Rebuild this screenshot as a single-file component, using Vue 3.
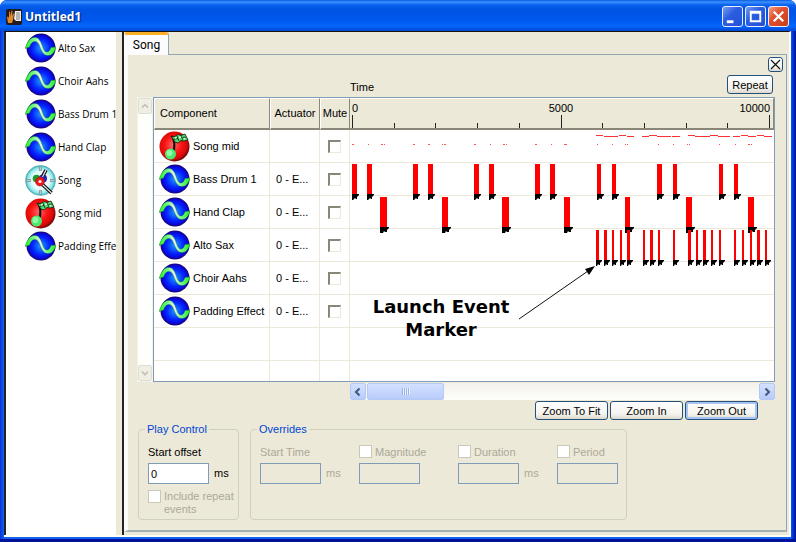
<template>
  <div class="window">
    <svg class="symbols" width="0" height="0" aria-hidden="true">
      <defs>
        <radialGradient id="blueBall" cx="0.5" cy="0.5" r="0.5">
          <stop offset="0" stop-color="#1c9cff" />
          <stop offset="0.6" stop-color="#0424ff" />
          <stop offset="0.85" stop-color="#0808dc" />
          <stop offset="1" stop-color="#1c0468" />
        </radialGradient>
        <radialGradient id="redBall" cx="0.45" cy="0.45" r="0.55">
          <stop offset="0" stop-color="#ff6a6a" />
          <stop offset="0.5" stop-color="#fb1414" />
          <stop offset="0.85" stop-color="#d80808" />
          <stop offset="1" stop-color="#6c0808" />
        </radialGradient>
        <radialGradient id="tealBall" cx="0.5" cy="0.5" r="0.5">
          <stop offset="0" stop-color="#ffffff" />
          <stop offset="0.6" stop-color="#e4fbfb" />
          <stop offset="0.85" stop-color="#8ee6ea" />
          <stop offset="1" stop-color="#3cacb0" />
        </radialGradient>
        <linearGradient id="waveFill" x1="0" y1="0" x2="1" y2="0">
          <stop offset="0" stop-color="#20f020" />
          <stop offset="0.3" stop-color="#7cf890" />
          <stop offset="0.5" stop-color="#eef6ee" />
          <stop offset="0.7" stop-color="#7cf890" />
          <stop offset="1" stop-color="#20f020" />
        </linearGradient>
      </defs>
      <symbol id="wave" viewBox="0 0 31 31">
        <circle cx="16" cy="15" r="14.500" fill="url(#blueBall)" />
        <path d="M0 15.500 1.500 11.500C4 6 7 4 10.500 4.500 14 5 15.500 8 17.500 13.500 19 17.500 20 19 22 19 23.500 19 25 17.500 26 14.500L31 14C29.500 19.500 27 22.500 23 22.500 19 22.500 17 19 15 14 13.500 10 12 8.500 9.500 8.500 7 8.500 5.500 11 4.500 14Z" fill="url(#waveFill)" stroke="#107820" stroke-width=".4" />
      </symbol>
      <symbol id="midi" viewBox="0 0 31 31">
        <circle cx="15.500" cy="15.500" r="15" fill="url(#redBall)" />
        <path d="M13 5C16 10 16.500 15 14 24" fill="none" stroke="#000" stroke-width="2" />
        <path d="M12 5 15 6 19 3.500 22 4.500 26 3 29 9 25 10 22 9.500 19 12 16 11Z" fill="#54dc74" stroke="#0c1c0c" stroke-width=".8" />
        <path d="M18 5 20 10M22 5 24 9M14.500 8.500 19 7.500M23.500 6.500 27 6" stroke="#0c1c0c" stroke-width=".8" />
        <path d="M16 7 17.500 6.500M20 6.500 22 6M24.500 8 26 7.500" stroke="#d8ffe0" stroke-width="1.400" />
        <circle cx="11.500" cy="23" r="5.500" fill="#4ce870" />
        <circle cx="10.500" cy="22" r="3" fill="#8cffa4" />
      </symbol>
      <symbol id="clock" viewBox="0 0 31 31">
        <circle cx="15.500" cy="15.500" r="15" fill="url(#tealBall)" stroke="#3aa4a8" stroke-width=".5" />
        <path d="M15.500 1.500V6M15.500 25V29.500M1.500 15.500H6M25 15.500H29.500" stroke="#7c8c90" stroke-width="2.500" />
        <path d="M15.500 2V5.500M15.500 25.500V29M2 15.500H5.500M25.500 15.500H29" stroke="#c0c8cc" stroke-width="1" />
        <circle cx="11.500" cy="13.500" r="3.800" fill="#18a028" />
        <circle cx="18" cy="13.500" r="4" fill="#1c28c8" />
        <path d="M17.500 11.500 21 5" stroke="#101010" stroke-width="3.600" />
        <path d="M17.500 12 21 5" stroke="#e8e8e8" stroke-width="1.200" />
        <path d="M17.500 19.500 26.500 28" stroke="#101010" stroke-width="3.600" />
        <path d="M17.500 19.500 26.500 28" stroke="#e8e8e8" stroke-width="1.200" />
        <circle cx="15" cy="16.500" r="4.500" fill="#f01818" stroke="#900808" stroke-width=".5" />
        <circle cx="15" cy="16.500" r="1.600" fill="#fff0f0" />
      </symbol>
    </svg>

    <header class="title-bar">
      <svg class="app-icon" viewBox="0 0 16 16" aria-hidden="true">
        <rect width="16" height="16" rx="2" fill="#241c1c" />
        <path d="M2 14 1 8 2 7.500 3 9 3 3 4 2.500 4.500 7 5.500 1.500 6.500 2 6 7 7.500 4 8 5 7 11 6 14Z" fill="#e08828" />
        <path d="M9 2H15V12H10L8 10Z" fill="#f0f0ec" />
        <path d="M10 4H14M10 6H14M10 8H14M10 10H14" stroke="#807c78" />
      </svg>
      <h1>Untitled1</h1>
      <div class="window-buttons">
        <button aria-label="Minimize">
          <svg viewBox="0 0 20 20"><path d="M4 14H11V17H4Z" fill="#fff" /></svg>
        </button>
        <button aria-label="Maximize">
          <svg viewBox="0 0 20 20"><path d="M4 4H16V16H4ZM6 7V14H14V7Z" fill="#fff" fill-rule="evenodd" /></svg>
        </button>
        <button class="close" aria-label="Close">
          <svg viewBox="0 0 20 20"><path d="M5 5 15 15M15 5 5 15" stroke="#fff" stroke-width="2.400" /></svg>
        </button>
      </div>
    </header>

    <div class="client">
      <ul class="sidebar">
        <li v-for="item in library" :key="item.name">
          <svg class="ball"><use :href="'#' + item.icon" /></svg>
          <span>{{ item.name }}</span>
        </li>
      </ul>

      <main class="pane">
        <div class="tabs" role="tablist">
          <button class="tab" role="tab" aria-selected="true">Song</button>
        </div>

        <section class="panel">
          <div class="close-row">
            <button class="xp-button close-panel" aria-label="Close panel">
              <svg viewBox="0 0 13 13"><path d="M2 2 11 11M11 2 2 11" stroke="#111" stroke-width="1.200" /></svg>
            </button>
          </div>

          <div class="time-row">
            <span class="time-label">Time</span>
            <button class="xp-button repeat">Repeat</button>
          </div>

          <div class="editor">
            <div class="v-scroll">
              <button disabled aria-label="Scroll up">
                <svg viewBox="0 0 14 14"><path d="M3.500 9 7 5.500 10.500 9" /></svg>
              </button>
              <button disabled aria-label="Scroll down">
                <svg viewBox="0 0 14 14"><path d="M3.500 5.500 7 9 10.500 5.500" /></svg>
              </button>
            </div>

            <div class="editor-main">
              <div class="grid">
                <table>
                  <thead>
                    <tr>
                      <th class="col-component">Component</th>
                      <th class="col-actuator">Actuator</th>
                      <th class="col-mute">Mute</th>
                    </tr>
                  </thead>
                  <tbody>
                    <tr v-for="track in tracks" :key="track.name">
                      <td>
                        <div class="component">
                          <svg class="ball"><use :href="'#' + track.icon" /></svg>
                          <span>{{ track.name }}</span>
                        </div>
                      </td>
                      <td class="actuator">{{ track.actuator }}</td>
                      <td class="mute">
                        <input v-model="track.mute" type="checkbox" :aria-label="'Mute ' + track.name" />
                      </td>
                    </tr>
                    <tr><td></td><td></td><td></td></tr>
                    <tr class="last"><td></td><td></td><td></td></tr>
                  </tbody>
                </table>

                <div class="timeline">
                  <svg class="ruler">
                    <line
                      v-for="n in 11"
                      :key="n"
                      :x1="tickX(n - 1)"
                      :x2="tickX(n - 1)"
                      :y1="(n - 1) % 5 === 0 ? 16 : 24"
                      y2="29"
                      stroke="#222"
                      stroke-width="1"
                    />
                    <text x="2" y="13">0</text>
                    <text x="211" y="13" text-anchor="middle">5000</text>
                    <text x="420" y="13" text-anchor="end">10000</text>
                  </svg>
                  <svg class="chart">
                    <line v-for="n in 7" :key="n" x1="0" x2="100%" :y1="n * 33 - 0.5" :y2="n * 33 - 0.5" stroke="#ece9d8" />
                    <rect v-for="(note, i) in notes" :key="'n' + i" :x="note[0]" :y="note[2]" :width="note[1]" height="1" fill="#f33" />
                    <rect v-for="(dot, i) in dots" :key="'d' + i" :x="dot[0]" y="14" :width="dot[1]" height="1" fill="#f55" />
                    <g v-for="lane in lanes" :key="lane.name">
                      <g v-for="(event, i) in lane.events" :key="i">
                        <rect :x="event[0]" :y="lane.y" :width="event[1]" height="31" fill="#f00" />
                        <path :transform="`translate(${event[0]} ${lane.y + 30})`" :d="lane.marker" fill="#000" />
                      </g>
                    </g>
                    <line x1="169" y1="189" x2="238" y2="141" stroke="#111" />
                    <polygon points="245,136 235,139 239,145" />
                    <text class="note" x="91" y="183" text-anchor="middle">Launch Event</text>
                    <text class="note" x="91" y="206" text-anchor="middle">Marker</text>
                  </svg>
                </div>
              </div>

              <div class="h-scroll">
                <button aria-label="Scroll left">
                  <svg viewBox="0 0 14 14"><path d="M8.500 3.500 5 7 8.500 10.500" /></svg>
                </button>
                <div class="thumb"><i></i><i></i><i></i><i></i></div>
                <button class="right" aria-label="Scroll right">
                  <svg viewBox="0 0 14 14"><path d="M5.500 3.500 9 7 5.500 10.500" /></svg>
                </button>
              </div>
            </div>
          </div>

          <div class="zoom-row">
            <button class="xp-button">Zoom To Fit</button>
            <button class="xp-button">Zoom In</button>
            <button class="xp-button default">Zoom Out</button>
          </div>

          <div class="groups">
            <fieldset class="play">
              <legend>Play Control</legend>
              <label class="caption" for="offset">Start offset</label>
              <div class="field">
                <input id="offset" v-model="offset" type="text" />
                <span>ms</span>
              </div>
              <label class="check repeat-events">
                <input type="checkbox" disabled />
                <span>Include repeat events</span>
              </label>
            </fieldset>

            <fieldset class="overrides">
              <legend>Overrides</legend>
              <div class="override-list">
                <div v-for="item in overrides" :key="item.id" class="override">
                  <div class="caption check">
                    <input v-if="item.check" type="checkbox" disabled :aria-label="'Override ' + item.label" />
                    <label :for="item.id">{{ item.label }}</label>
                  </div>
                  <div class="field">
                    <input :id="item.id" type="text" disabled />
                    <span v-if="item.unit">{{ item.unit }}</span>
                  </div>
                </div>
              </div>
            </fieldset>
          </div>
        </section>
      </main>
    </div>
  </div>
</template>

<script setup>
import { ref } from 'vue';

const library = [
  { name: 'Alto Sax', icon: 'wave' },
  { name: 'Choir Aahs', icon: 'wave' },
  { name: 'Bass Drum 1', icon: 'wave' },
  { name: 'Hand Clap', icon: 'wave' },
  { name: 'Song', icon: 'clock' },
  { name: 'Song mid', icon: 'midi' },
  { name: 'Padding Effect', icon: 'wave' },
];

const tracks = ref([
  { name: 'Song mid', icon: 'midi', actuator: '', mute: false },
  { name: 'Bass Drum 1', icon: 'wave', actuator: '0 - E...', mute: false },
  { name: 'Hand Clap', icon: 'wave', actuator: '0 - E...', mute: false },
  { name: 'Alto Sax', icon: 'wave', actuator: '0 - E...', mute: false },
  { name: 'Choir Aahs', icon: 'wave', actuator: '0 - E...', mute: false },
  { name: 'Padding Effect', icon: 'wave', actuator: '0 - E...', mute: false },
]);

const offset = ref('0');

const overrides = [
  { id: 'start-time', label: 'Start Time', check: false, unit: 'ms' },
  { id: 'magnitude', label: 'Magnitude', check: true, unit: '' },
  { id: 'duration', label: 'Duration', check: true, unit: 'ms' },
  { id: 'period', label: 'Period', check: true, unit: '' },
];

function tickX(n) {
  return Math.round(2 + n * 41.7) + 0.5;
}

const wideMarker = 'M0 0H7V1L5 3V5H4L3 4 2 5 1 6H0Z';
const clapMarker = 'M0 0H9V1L7 3V5H5L4 4 3 6H0Z';
const thinMarker = 'M0 0H6V1L4 3V5H3L2 4 1 6H0Z';

// Each event is [x, width]
const lanes = [
  {
    name: 'Bass Drum 1',
    y: 34,
    marker: wideMarker,
    events: [
      [2, 5], [17, 5], [63, 5], [78, 5], [124, 5], [139, 5], [185, 5], [200, 5],
      [247, 4], [262, 4], [307, 5], [323, 4], [369, 4], [384, 4],
    ],
  },
  {
    name: 'Hand Clap',
    y: 67,
    marker: clapMarker,
    events: [[30, 7], [92, 6], [152, 7], [214, 6], [275, 5], [336, 6], [398, 6]],
  },
  {
    name: 'Alto Sax',
    y: 100,
    marker: thinMarker,
    events: [
      [246, 3], [254, 3], [262, 2], [270, 2], [277, 3], [293, 2], [300, 3], [308, 2], [323, 2], [338, 3],
      [346, 2], [353, 3], [361, 2], [369, 2], [384, 2], [392, 2], [400, 2], [407, 3], [415, 2],
    ],
  },
];

// Midi notes: [x, width, y]
const notes = [
  [246, 7, 5], [254, 14, 6], [269, 7, 5], [277, 7, 6], [292, 7, 6], [299, 8, 5], [307, 14, 6], [322, 8, 6],
  [338, 7, 5], [345, 15, 6], [360, 8, 5], [368, 12, 6], [383, 7, 6], [391, 7, 5], [398, 8, 6], [407, 7, 5], [414, 8, 6],
];

const dots = [
  [2, 2], [18, 1], [31, 2], [34, 1], [63, 2], [78, 2], [92, 1], [94, 2], [124, 2], [140, 1], [153, 2], [156, 1],
  [185, 2], [201, 1], [214, 3], [247, 1], [262, 1], [275, 1], [277, 1], [308, 1], [323, 1], [337, 1], [339, 1],
  [369, 1], [385, 1], [398, 2], [401, 1],
];
</script>

<style>
body {
  margin: 0;
  background: #fff;
}
</style>

<style scoped>
* {
  box-sizing: border-box;
}

.window {
  display: flex;
  flex-direction: column;
  min-height: 100vh;
  padding: 0 5px 5px 4px;
  border-radius: 7px 7px 0 0;
  background: linear-gradient(to right, #0831d9, #1660f0 4px, #1660f0 calc(100% - 5px), #0040f0 calc(100% - 4px), #00138c);
  box-shadow: inset 0 -3px 0 #00139c;
  font-family: "Liberation Sans", Arial, sans-serif;
  font-size: 11px;
  line-height: 13px;
  color: #000;
}

.symbols {
  position: absolute;
}

button,
input {
  margin: 0;
  padding: 0;
  font: inherit;
  color: inherit;
}

/* Title bar */
.title-bar {
  display: flex;
  align-items: center;
  gap: 3px;
  height: 31px;
  margin: 0 -5px 0 -4px;
  padding: 2px 7px 0 6px;
  border-radius: 7px 7px 0 0;
  background: linear-gradient(#0a5ae0, #3a92ff 2px, #0a60ee 5px, #0054e3 10px, #0058ee 20px, #0466ff 26px, #0048d0);
}

.app-icon {
  width: 16px;
  height: 16px;
}

h1 {
  flex: 1;
  margin: 0;
  font-family: "Open Sans", "Noto Sans", sans-serif;
  font-size: 12px;
  font-weight: bold;
  line-height: 16px;
  color: #fff;
  text-shadow: 1px 1px 1px #00207a;
}

.window-buttons {
  display: flex;
  gap: 2px;
}

.window-buttons button {
  width: 21px;
  height: 21px;
  border: 1px solid #e8eefc;
  border-radius: 3px;
  background: linear-gradient(135deg, #7a9cf4, #2c5ee0 40%, #2450d8);
}

.window-buttons .close {
  background: linear-gradient(135deg, #f0a080, #e05030 40%, #c83c18);
}

.window-buttons svg {
  display: block;
  width: 19px;
  height: 19px;
}

/* Body */
.client {
  flex: 1;
  display: flex;
  border-top: 1px solid #16140c;
  border-right: 2px solid #fffef4;
  border-bottom: 2px solid #fffef4;
  background: #ece9d8;
}

.sidebar {
  flex: none;
  width: 113px;
  margin: 0 5px 0 0;
  padding: 0;
  border-left: 2px solid #222;
  border-right: 1px solid #ece9d8;
  background: #fff;
  list-style: none;
  overflow: hidden;
  font-family: "Open Sans", "Noto Sans", sans-serif;
  font-size: 10px;
}

.sidebar li {
  display: flex;
  align-items: center;
  gap: 2px;
  height: 33px;
  padding-left: 19px;
  white-space: nowrap;
}

.ball {
  flex: none;
  width: 31px;
  height: 31px;
}

.pane {
  flex: 1;
  min-width: 0;
  display: flex;
  flex-direction: column;
  padding: 0 2px 3px 0;
  border-left: 2px solid #222;
}

.tabs {
  display: flex;
  height: 22px;
}

.tab {
  width: 45px;
  height: 23px;
  border: 1px solid #91a7b4;
  border-top: 3px solid #ffb028;
  border-bottom: 0;
  border-left-color: #fff;
  border-radius: 3px 3px 0 0;
  background: #fcfcfe;
  font-family: Roboto, "Open Sans", sans-serif;
  font-size: 12px;
  z-index: 1;
}

.panel {
  flex: 1;
  border: 1px solid #91a7b4;
  border-left: 4px solid #fafaf8;
  border-bottom: 2px solid #a4b0b4;
  padding: 2px 11px 8px 9px;
}

.xp-button {
  border: 1px solid #24507c;
  border-radius: 3px;
  background: linear-gradient(#fff, #f4f3ee 70%, #dcd8cc);
  line-height: 14px;
}

.close-row {
  display: flex;
  justify-content: flex-end;
  margin-right: -8px;
}

.close-panel {
  width: 15px;
  height: 15px;
}

.close-panel svg {
  display: block;
  width: 13px;
  height: 13px;
}

.time-row {
  display: flex;
  justify-content: space-between;
  align-items: flex-end;
  margin-top: 3px;
  padding: 0 2px 0 213px;
}

.time-label {
  line-height: 13px;
}

.repeat {
  width: 46px;
  height: 19px;
}

.editor {
  display: flex;
  align-items: flex-start;
  margin-top: 3px;
}

.editor-main {
  flex: 1;
  min-width: 0;
}

.v-scroll {
  display: flex;
  flex-direction: column;
  justify-content: space-between;
  align-self: stretch;
  width: 16px;
  margin-bottom: 18px;
  border: 1px solid #f4f2e8;
  background: #fefefa;
}

.v-scroll button {
  width: 14px;
  height: 16px;
  border: 1px solid #e0ddd0;
  border-radius: 2px;
  background: #f0efe6;
}

.v-scroll svg,
.h-scroll svg {
  display: block;
  width: 12px;
  height: 14px;
  fill: none;
  stroke: #c4c2b8;
  stroke-width: 2;
}

.grid {
  display: flex;
  border: 1px solid #7f9db9;
  background: #fff;
}

table {
  flex: none;
  width: 196px;
  border-collapse: separate;
  border-spacing: 0;
  table-layout: fixed;
}

th,
.ruler {
  height: 32px;
  border-top: 1px solid #fff;
  border-right: 1px solid #8a8778;
  border-bottom: 2px solid #8a8778;
  background: #ece9d8;
}

th {
  padding: 0;
  border-left: 1px solid #fff;
  font-weight: normal;
}

.col-component {
  width: 116px;
  padding-left: 5px;
  text-align: left;
}

.col-actuator {
  width: 50px;
}

.col-mute {
  width: 30px;
}

td {
  height: 33px;
  padding: 0;
  border-right: 1px solid #ece9d8;
  border-bottom: 1px solid #ece9d8;
}

.last td {
  height: 20px;
  border-bottom: 0;
}

.component {
  display: flex;
  align-items: center;
  gap: 3px;
  padding-left: 5px;
  white-space: nowrap;
}

.actuator {
  padding-left: 6px;
}

.mute {
  text-align: center;
}

.mute input {
  appearance: none;
  display: block;
  width: 13px;
  height: 13px;
  margin: 0 auto;
  border: 1px solid #ece9d8;
  border-top: 2px solid #8a8678;
  border-left: 2px solid #8a8678;
  background: #fff;
}

.timeline {
  flex: 1;
  min-width: 0;
  display: flex;
  flex-direction: column;
}

.ruler {
  display: block;
  width: 100%;
}

.ruler text {
  font-size: 11px;
}

.chart {
  display: block;
  flex: 1;
  width: 100%;
}

.note {
  font-family: "DejaVu Sans", Verdana, sans-serif;
  font-size: 18px;
  font-weight: bold;
}

.h-scroll {
  display: flex;
  height: 17px;
  margin-top: 1px;
  margin-left: 197px;
  background: linear-gradient(#f3f2ea, #fefefa);
}

.h-scroll button,
.thumb {
  border: 1px solid #b4c8f4;
  border-radius: 2px;
  background: linear-gradient(#d4e0ff, #b8ccfa);
}

.h-scroll button {
  width: 16px;
}

.h-scroll svg {
  width: 14px;
  stroke: #40587c;
}

.h-scroll .right {
  margin-left: auto;
}

.thumb {
  display: flex;
  align-items: center;
  justify-content: center;
  gap: 1px;
  width: 77px;
  margin-left: 1px;
}

.thumb i {
  width: 1px;
  height: 7px;
  background: #98b0e8;
  box-shadow: 1px 0 0 #eef4ff;
}

.zoom-row {
  display: flex;
  justify-content: flex-end;
  gap: 2px;
  margin-top: 1px;
  padding-right: 17px;
}

.zoom-row button {
  width: 73px;
  height: 19px;
}

.default {
  box-shadow: inset 0 0 0 2px #a8c4f4;
}

/* Groups */
.groups {
  display: flex;
  gap: 11px;
  margin-top: 2px;
  padding-left: 1px;
}

fieldset {
  height: 98px;
  min-width: 0;
  margin: 0;
  padding: 9px 0 0 9px;
  border: 1px solid #d0d0bf;
  border-radius: 4px;
}

legend {
  margin-left: -3px;
  padding: 0 2px;
  line-height: 14px;
  color: #0046d5;
}

.play {
  width: 101px;
}

.overrides {
  width: 377px;
  color: #aca899;
}

.override-list {
  display: flex;
}

.override {
  flex: none;
  width: 99px;
}

.override:last-child {
  width: 61px;
}

.caption {
  height: 14px;
  margin-bottom: 4px;
  line-height: 14px;
}

.play .caption {
  display: block;
}

.field {
  display: flex;
  align-items: center;
  gap: 5px;
}

.field input {
  width: 61px;
  height: 21px;
  padding: 0 2px;
  border: 1px solid #7f9db9;
  background: #fff;
}

.field input:disabled {
  background: #ece9d8;
}

.check {
  display: flex;
  gap: 3px;
}

.check input {
  appearance: none;
  flex: none;
  width: 13px;
  height: 13px;
  border: 1px solid #cac8bb;
  background: #fff;
}

.repeat-events {
  margin-top: 6px;
  color: #aca899;
}
</style>
